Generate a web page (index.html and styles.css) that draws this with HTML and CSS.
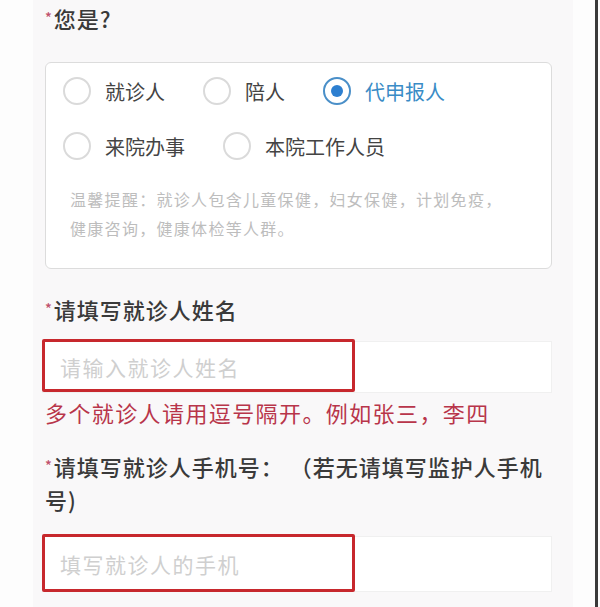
FILE: index.html
```html
<!DOCTYPE html>
<html>
<head>
    <meta charset="UTF-8" />
    <meta name="viewport" content="width=device-width, initial-scale=1.0"/>
    <title>就诊人信息登记</title>
    <link rel="stylesheet" href="styles.css">
</head>
<body>
    <div class="frame">
        <main class="form">
            <!-- 身份选择 -->
            <div class="field-title required">您是?</div>
            <div class="choice-box">
                <div class="radio-group">
                    <label class="radio"><span class="dot"></span>就诊人</label>
                    <label class="radio"><span class="dot"></span>陪人</label>
                    <label class="radio checked"><span class="dot"></span>代申报人</label>
                    <label class="radio"><span class="dot"></span>来院办事</label>
                    <label class="radio"><span class="dot"></span>本院工作人员</label>
                </div>
                <p class="tip">温馨提醒：就诊人包含儿童保健，妇女保健，计划免疫，健康咨询，健康体检等人群。</p>
            </div>

            <!-- 姓名 -->
            <div class="field-title required name-title">请填写就诊人姓名</div>
            <div class="input-row">
                <div class="input">请输入就诊人姓名</div>
                <div class="mark"></div>
            </div>
            <p class="warn">多个就诊人请用逗号隔开。例如张三，李四</p>

            <!-- 手机号 -->
            <div class="field-title required phone-title">请填写就诊人手机号： （若无请填写监护人手机号)</div>
            <div class="input-row phone-row">
                <div class="input">填写就诊人的手机</div>
                <div class="mark"></div>
            </div>
        </main>
        <div class="edge"></div>
    </div>
</body>
</html>
```

FILE: styles.css
```css
* {
    margin: 0;
    padding: 0;
    box-sizing: border-box;
}
body {
    font-family: "Noto Sans CJK SC", "Noto Sans", sans-serif;
    background: #fdfdfd;
    color: #333;
    overflow: hidden;
}
.frame {
    display: flex;
    height: 607px;
}

/* 表单主体 */
.form {
    width: 540px;
    margin-left: 33px;
    padding: 2px 21px 0 12px;
    background: #f9f8f9;
}
.field-title {
    font-size: 22px;
    line-height: 32px;
    font-weight: 500;
    color: #3a3a3a;
    letter-spacing: 1px;
}
/* 必填标记 */
.required::before {
    content: "*";
    display: inline-block;
    color: #c0506a;
    font-size: 14px;
    line-height: 1;
    vertical-align: 5px;
    margin-right: 1px;
}

/* 单选框区域 */
.choice-box {
    margin-top: 28px;
    background: #fff;
    border: 1px solid #dcdcdc;
    border-radius: 6px;
    padding: 14px 17px 25px;
}
.radio-group {
    display: flex;
    flex-wrap: wrap;
    column-gap: 38px;
    row-gap: 27px;
}
.radio {
    display: flex;
    align-items: center;
    gap: 14px;
    height: 28px;
    font-size: 20px;
    color: #444;
}
.dot {
    width: 28px;
    height: 28px;
    border: 2px solid #dadada;
    border-radius: 50%;
    display: flex;
    align-items: center;
    justify-content: center;
}
.checked {
    color: #3a8cc6;
}
.checked .dot {
    border-color: #4a8fc8;
}
.checked .dot::after {
    content: "";
    width: 12px;
    height: 12px;
    border-radius: 50%;
    background: #2d7fd0;
}
.tip {
    margin-top: 25px;
    padding: 0 26px 0 7px;
    font-size: 16px;
    line-height: 29px;
    letter-spacing: 1.3px;
    color: #bdbdbd;
}

/* 输入框 */
.name-title {
    margin-top: 24px;
}
.input-row {
    position: relative;
    margin-top: 16px;
}
.input {
    height: 52px;
    background: #fff;
    border: 1px solid #f0f0f0;
    font-size: 21px;
    line-height: 50px;
    padding-left: 17px;
    letter-spacing: 1.5px;
    color: #cfcfcf;
    margin-left: -3px;
}
/* 截图上的红色标注框 */
.mark {
    position: absolute;
    left: -3px;
    top: -2px;
    width: 313px;
    height: 53px;
    border: 3px solid #c7282d;
    border-radius: 2px;
}
.warn {
    margin-top: 3px;
    font-size: 22px;
    line-height: 32px;
    letter-spacing: 1.4px;
    color: #b8354a;
}
.phone-title {
    margin-top: 22px;
    line-height: 33px;
}
.phone-row {
    margin-top: 20px;
}
.phone-row .input {
    height: 56px;
    line-height: 54px;
}
.phone-row .mark {
    height: 58px;
}

/* 右侧深色边线 */
.edge {
    margin-left: 22px;
    width: 3px;
    background: #3a3a3a;
}
```
